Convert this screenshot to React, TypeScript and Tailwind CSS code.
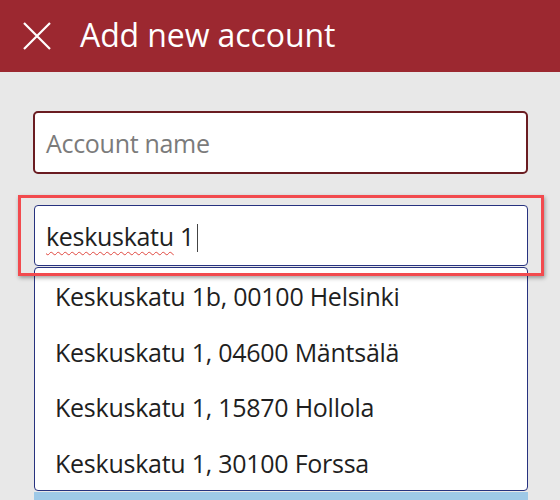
import React from 'react';

const suggestions = [
  'Keskuskatu 1b, 00100 Helsinki',
  'Keskuskatu 1, 04600 Mäntsälä',
  'Keskuskatu 1, 15870 Hollola',
  'Keskuskatu 1, 30100 Forssa',
];

export default function App() {
  return (
    <div
      className="w-[560px] h-[500px] overflow-hidden bg-[#e8e8e8]"
      style={{ fontFamily: '"Open Sans", "Noto Sans", sans-serif' }}
    >
      <div className="h-[72px] bg-[#9c2830] flex items-center pl-[23px]">
        <svg width="28" height="28" viewBox="0 0 28 28" className="text-white">
          <path d="M1 1 L27 27 M27 1 L1 27" stroke="currentColor" strokeWidth="2.2" fill="none" />
        </svg>
        <h1 className="ml-[29px] text-white text-[32px] leading-none tracking-[-0.1px] pb-[2px]">Add new account</h1>
      </div>

      <div className="pt-[39px] pl-[33px] pr-[32px]">
        <div className="h-[63px] rounded-[5px] border-2 border-[#6a1c21] bg-white flex items-center pl-[11px]">
          <span className="text-[25px] text-[#7b7b7b] tracking-[-0.3px] pt-[2px]">Account name</span>
        </div>

        <div className="relative mt-[31px] ml-[1px]">
          <div className="h-[61px] rounded-[4px] border-[1.5px] border-[#27327f] bg-white flex items-center pl-[11px]">
            <span className="text-[25px] text-[#1f1f1f] tracking-[-0.3px] pt-[3px]">
              <span className="underline decoration-wavy decoration-[#e0473f] decoration-1 underline-offset-[5px]">keskuskatu</span> 1
            </span>
            <span className="ml-[3px] mt-[4px] w-[1px] h-[28px] bg-[#444]" />
          </div>
          <div className="absolute -left-[16px] -top-[10px] -right-[16px] h-[81px] border-[3px] border-[#f24a4e] shadow-[1px_2px_4px_rgba(0,0,0,0.35)] pointer-events-none" />

          <div className="mt-[1px] rounded-[4px] border-[1.5px] border-[#27327f] bg-white">
            {suggestions.map((s) => (
              <div key={s} className="h-[55.5px] flex items-center pl-[20px] pt-[2px] text-[25px] text-[#1f1f1f] tracking-[-0.25px]">
                {s}
              </div>
            ))}
          </div>
          <div className="mt-[1px] h-[20px] bg-[#9ec9e7]" />
        </div>
      </div>
    </div>
  );
}
